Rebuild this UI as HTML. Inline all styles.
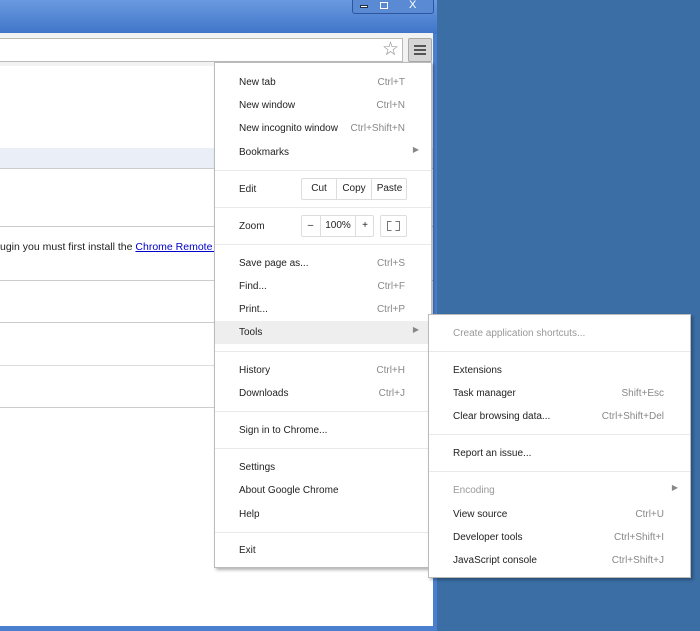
<!DOCTYPE html><html><head><style>
*{margin:0;padding:0;box-sizing:border-box}
body{width:700px;height:631px;overflow:hidden;background:#3a6ea5;position:relative;font-family:"Liberation Sans",sans-serif;font-size:10px;color:#222}
div,span{position:absolute}
.t{left:24px}
.s{right:26px;color:#888}
.sep{height:1px;background:#e9e9e9;left:0;right:0}
.r{height:18px;line-height:18px;left:0;right:0}
.btn{border:1px solid #ddd;border-radius:2px;height:22px;line-height:20px;text-align:center;background:#fff}
</style></head><body>
<div style="left:0;top:0;width:437px;height:631px;background:#4a7fd0"></div>
<div style="left:0;top:0;width:437px;height:34px;background:linear-gradient(#6a9ae0,#3f74c8)"></div>
<div style="left:352px;top:0;width:82px;height:14px;border:1px solid #2c56a0;border-top:0;border-radius:0 0 3px 3px;background:#5b8ad5"></div>
<div style="left:360px;top:5px;width:8px;height:3px;background:#fff;border:1px solid #234"></div>
<div style="left:380px;top:2px;width:8px;height:7px;border:1px solid #fff"></div>
<div style="left:409px;top:-1px;color:#fff;font-size:11px">X</div>
<div style="left:0;top:33px;width:433px;height:34px;background:#f2f2f2"></div>
<div style="left:0;top:38px;width:403px;height:24px;background:#fff;border:1px solid #bbb;border-left:0"></div>
<div style="left:382px;top:38px;font-size:19px;color:#888">☆</div>
<div style="left:408px;top:38px;width:24px;height:24px;background:#d6d6d6;border:1px solid #aaa;border-radius:2px"></div>
<div style="left:414px;top:45px;width:12px;height:2px;background:#555;box-shadow:0 4px #555,0 8px #555"></div>
<div style="left:0;top:66px;width:433px;height:560px;background:#fff"></div>
<div style="left:0;top:148px;width:433px;height:20px;background:#e9eef7"></div>
<div style="left:0;top:168px;width:433px;height:1px;background:#ccc"></div>
<div style="left:0;top:226px;width:433px;height:1px;background:#ccc"></div>
<div style="left:0;top:241px;font-size:10.5px;white-space:nowrap">ugin you must first install the <span style="position:static;color:#00c;text-decoration:underline">Chrome Remote D</span></div>
<div style="left:0;top:280px;width:433px;height:1px;background:#ccc"></div>
<div style="left:0;top:322px;width:433px;height:1px;background:#ccc"></div>
<div style="left:0;top:365px;width:433px;height:1px;background:#ddd"></div>
<div style="left:0;top:407px;width:433px;height:1px;background:#ccc"></div>

<div style="left:214px;top:62px;width:218px;height:506px;background:#fff;border:1px solid #bbb;box-shadow:2px 2px 3px rgba(0,0,0,.3)">
<div class="r" style="top:11px"><span class="t">New tab</span><span class="s">Ctrl+T</span></div>
<div class="r" style="top:34px"><span class="t">New window</span><span class="s">Ctrl+N</span></div>
<div class="r" style="top:57px"><span class="t">New incognito window</span><span class="s">Ctrl+Shift+N</span></div>
<div class="r" style="top:81px"><span class="t">Bookmarks</span><span class="s" style="right:12px;font-size:8px;top:-3px">▶</span></div>
<div class="sep" style="top:107px"></div>
<div class="r" style="top:118px"><span class="t">Edit</span></div>
<div class="btn" style="left:86px;top:115px;width:106px"></div>
<div style="left:86px;top:116px;width:36px;line-height:20px;text-align:center">Cut</div>
<div style="left:121px;top:116px;width:1px;height:20px;background:#ddd"></div>
<div style="left:122px;top:116px;width:34px;line-height:20px;text-align:center">Copy</div>
<div style="left:156px;top:116px;width:1px;height:20px;background:#ddd"></div>
<div style="left:157px;top:116px;width:35px;line-height:20px;text-align:center">Paste</div>
<div class="sep" style="top:144px"></div>
<div class="r" style="top:155px"><span class="t">Zoom</span></div>
<div class="btn" style="left:86px;top:152px;width:73px"></div>
<div style="left:86px;top:153px;width:19px;line-height:20px;text-align:center">–</div>
<div style="left:105px;top:153px;width:1px;height:20px;background:#ddd"></div>
<div style="left:106px;top:153px;width:34px;line-height:20px;text-align:center">100%</div>
<div style="left:140px;top:153px;width:1px;height:20px;background:#ddd"></div>
<div style="left:141px;top:153px;width:18px;line-height:20px;text-align:center">+</div>
<div class="btn" style="left:165px;top:152px;width:27px"></div>
<div style="left:172px;top:158px;width:13px;height:10px;border:1px solid #777;clip-path:polygon(0 0,35% 0,35% 35%,65% 35%,65% 0,100% 0,100% 100%,65% 100%,65% 65%,35% 65%,35% 100%,0 100%)"></div>
<div class="sep" style="top:181px"></div>
<div class="r" style="top:192px"><span class="t">Save page as...</span><span class="s">Ctrl+S</span></div>
<div class="r" style="top:215px"><span class="t">Find...</span><span class="s">Ctrl+F</span></div>
<div class="r" style="top:238px"><span class="t">Print...</span><span class="s">Ctrl+P</span></div>
<div style="left:0;right:0;top:258px;height:23px;background:#eee"></div>
<div class="r" style="top:261px"><span class="t">Tools</span><span class="s" style="right:12px;font-size:8px;top:-3px">▶</span></div>
<div class="sep" style="top:288px"></div>
<div class="r" style="top:299px"><span class="t">History</span><span class="s">Ctrl+H</span></div>
<div class="r" style="top:322px"><span class="t">Downloads</span><span class="s">Ctrl+J</span></div>
<div class="sep" style="top:348px"></div>
<div class="r" style="top:359px"><span class="t">Sign in to Chrome...</span></div>
<div class="sep" style="top:385px"></div>
<div class="r" style="top:396px"><span class="t">Settings</span></div>
<div class="r" style="top:419px"><span class="t">About Google Chrome</span></div>
<div class="r" style="top:443px"><span class="t">Help</span></div>
<div class="sep" style="top:469px"></div>
<div class="r" style="top:479px"><span class="t">Exit</span></div>
</div>

<div style="left:428px;top:314px;width:263px;height:264px;background:#fff;border:1px solid #bbb;box-shadow:2px 2px 3px rgba(0,0,0,.3)">
<div class="r" style="top:10px"><span class="t" style="color:#999">Create application shortcuts...</span></div>
<div class="sep" style="top:36px"></div>
<div class="r" style="top:47px"><span class="t">Extensions</span></div>
<div class="r" style="top:70px"><span class="t">Task manager</span><span class="s">Shift+Esc</span></div>
<div class="r" style="top:93px"><span class="t">Clear browsing data...</span><span class="s">Ctrl+Shift+Del</span></div>
<div class="sep" style="top:119px"></div>
<div class="r" style="top:130px"><span class="t">Report an issue...</span></div>
<div class="sep" style="top:156px"></div>
<div class="r" style="top:167px"><span class="t" style="color:#999">Encoding</span><span class="s" style="right:12px;font-size:8px;top:-3px">▶</span></div>
<div class="r" style="top:191px"><span class="t">View source</span><span class="s">Ctrl+U</span></div>
<div class="r" style="top:214px"><span class="t">Developer tools</span><span class="s">Ctrl+Shift+I</span></div>
<div class="r" style="top:237px"><span class="t">JavaScript console</span><span class="s">Ctrl+Shift+J</span></div>
</div>
</body></html>
